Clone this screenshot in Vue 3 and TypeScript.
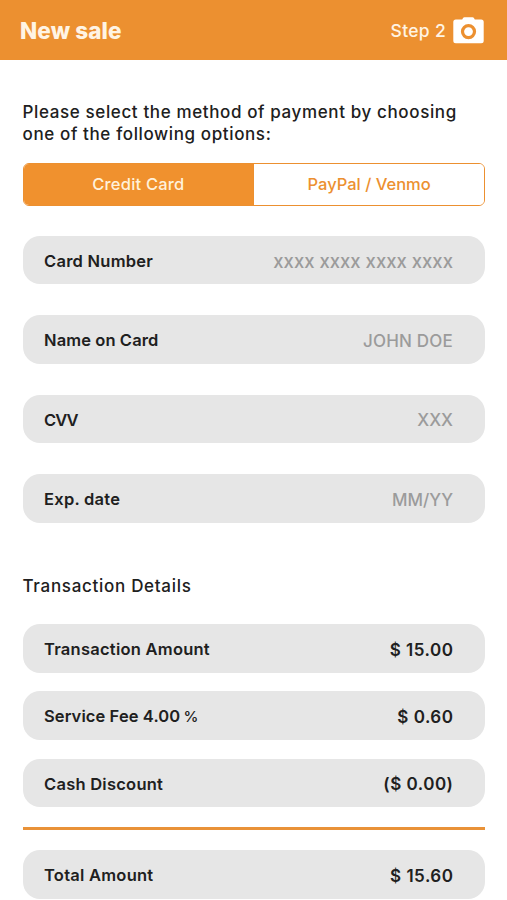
<script setup lang="ts">
import { ref } from 'vue'

type Method = 'card' | 'paypal'

const method = ref<Method>('card')
const form = ref({ number: '', name: '', cvv: '', exp: '' })

const fields: { key: keyof typeof form.value; label: string; placeholder: string }[] = [
  { key: 'number', label: 'Card Number', placeholder: 'xxxx xxxx xxxx xxxx' },
  { key: 'name', label: 'Name on Card', placeholder: 'JOHN DOE' },
  { key: 'cvv', label: 'CVV', placeholder: 'XXX' },
  { key: 'exp', label: 'Exp. date', placeholder: 'MM/YY' },
]

const details = [
  { key: 'amount', label: 'Transaction Amount', unit: '', value: '$ 15.00' },
  { key: 'fee', label: 'Service Fee 4.00', unit: '%', value: '$ 0.60' },
  { key: 'discount', label: 'Cash Discount', unit: '', value: '($ 0.00)' },
]
</script>

<template>
  <div class="page">
    <header class="bar">
      <h1 class="title">New sale</h1>
      <div class="step">
        <span>Step 2</span>
        <svg class="camera" width="31" height="27" viewBox="0 0 31 27" aria-hidden="true">
          <path
            fill="#fff"
            fill-rule="evenodd"
            d="M9.2 2.6 9.9 1.2Q10.4.3 11.5.3H19.5Q20.6.3 21.1 1.2L21.8 2.6H28.2Q30.7 2.6 30.7 5.1V23.7Q30.7 26.2 28.2 26.2H2.8Q.3 26.2.3 23.7V5.1Q.3 2.6 2.8 2.6ZM15.5 7A7.6 7.6 0 1 0 15.5 22.2A7.6 7.6 0 1 0 15.5 7ZM15.5 10.2A4.4 4.4 0 1 1 15.5 19A4.4 4.4 0 1 1 15.5 10.2Z"
          />
        </svg>
      </div>
    </header>

    <main class="content">
      <p class="intro">Please select the method of payment by choosing<br />one of the following options:</p>

      <div class="tabs">
        <button class="tab" :class="{ active: method === 'card' }" @click="method = 'card'">Credit Card</button>
        <button class="tab paypal" :class="{ active: method === 'paypal' }" @click="method = 'paypal'">PayPal / Venmo</button>
      </div>

      <div class="fields">
        <label v-for="f in fields" :key="f.key" class="row">
          <span class="label" :class="f.key">{{ f.label }}</span>
          <input v-model="form[f.key]" class="input" :class="f.key" :placeholder="f.placeholder" />
        </label>
      </div>

      <h2 class="subtitle">Transaction Details</h2>

      <div class="details">
        <div v-for="d in details" :key="d.key" class="row">
          <span class="label" :class="d.key">{{ d.label }}<span v-if="d.unit" class="unit">&nbsp;{{ d.unit }}</span></span>
          <span class="value">{{ d.value }}</span>
        </div>
      </div>

      <hr class="rule" />

      <div class="row">
        <span class="label">Total Amount</span>
        <span class="value">$ 15.60</span>
      </div>
    </main>
  </div>
</template>

<style>
body {
  margin: 0;
  background: #fff;
}
</style>

<style scoped>
.page {
  box-sizing: border-box;
  height: 900px;
  overflow: hidden;
  font-family: Inter, 'Liberation Sans', sans-serif;
  font-size: 17px;
  color: #202020;
}
.bar {
  box-sizing: border-box;
  height: 60px;
  padding: 0 23px 0 20px;
  display: flex;
  align-items: center;
  justify-content: space-between;
  background: #ec9030;
  color: #fff4e4;
}
.title {
  margin: 0;
  padding-top: 1px;
  font-size: 22.5px;
  line-height: 28px;
  font-weight: 800;
  letter-spacing: 0.1px;
}
.step {
  display: flex;
  align-items: center;
  gap: 7px;
  font-weight: 500;
  font-size: 17.5px;
  letter-spacing: 0.3px;
}
.step span {
  padding-top: 1px;
}
.camera {
  display: block;
}
.content {
  padding: 41px 22px 0 22.5px;
}
.intro {
  margin: 0;
  line-height: 22px;
  font-weight: 450;
  letter-spacing: 0.62px;
  white-space: nowrap;
}
.tabs {
  box-sizing: border-box;
  display: flex;
  height: 43.5px;
  margin-top: 17.5px;
  border: 1.5px solid #ec9030;
  border-radius: 6px;
  overflow: hidden;
}
.tab {
  flex: 1;
  padding: 0 0 1px;
  border: 0;
  background: #fff;
  color: #ec9030;
  font: inherit;
  font-size: 16.5px;
  font-weight: 500;
  letter-spacing: 0.2px;
}
.tab.paypal {
  letter-spacing: 0;
  border-left: 1px solid #ec9030;
}
.tab.active {
  background: #f0912e;
  color: #fff1dc;
}
.fields {
  display: flex;
  flex-direction: column;
  gap: 31px;
  margin-top: 30px;
}
.row {
  box-sizing: border-box;
  display: flex;
  align-items: center;
  justify-content: space-between;
  height: 48.4px;
  padding: 0 32px 0 21.5px;
  border-radius: 17px;
  background: #e6e6e6;
}
.label {
  padding-top: 1.2px;
  font-size: 16.5px;
  font-weight: 600;
  letter-spacing: 0.25px;
  white-space: nowrap;
}
.label.name {
  letter-spacing: 0.1px;
}
.label.cvv {
  letter-spacing: -0.9px;
}
.label.fee {
  letter-spacing: 0.1px;
}
.unit {
  margin-left: -1px;
  font-size: 15px;
  font-weight: 500;
}
.input {
  flex: 1;
  min-width: 0;
  padding: 3px 0 0;
  border: 0;
  outline: 0;
  background: transparent;
  font: inherit;
  font-weight: 500;
  text-align: right;
  color: #202020;
}
.input::placeholder {
  color: #9b9b9b;
  opacity: 1;
}
.input.number {
  padding-top: 2px;
  font-size: 18.5px;
}
.input.name {
  letter-spacing: 0.2px;
}
.subtitle {
  margin: 52.8px 0 0;
  font-size: 17px;
  line-height: 22px;
  font-weight: 450;
  letter-spacing: 0.7px;
}
.details {
  display: flex;
  flex-direction: column;
  gap: 18.9px;
  margin-top: 26.8px;
}
.value {
  padding-top: 3px;
  font-size: 17px;
  font-weight: 600;
  letter-spacing: 0.5px;
  margin-right: -0.45px;
}
.rule {
  height: 3px;
  margin: 20px 0;
  border: 0;
  background: #e99238;
}
</style>
